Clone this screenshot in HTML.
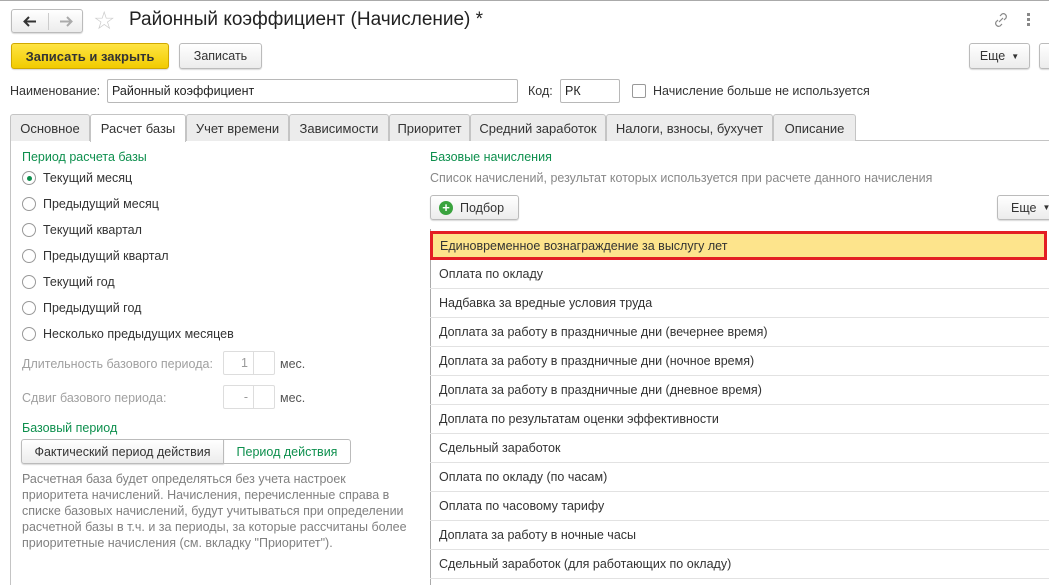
<!DOCTYPE html>
<html><head><meta charset="utf-8"><style>
*{box-sizing:border-box}
body{margin:0;width:1049px;height:585px;overflow:hidden;background:#fff;font-family:"Liberation Sans",Arial,sans-serif;font-size:12.5px;color:#333;position:relative}
.a{position:absolute;white-space:nowrap}
.btn{position:absolute;border:1px solid #bbb;border-radius:3px;background:linear-gradient(#fff,#ececec);box-shadow:0 1px 1px rgba(0,0,0,.15);display:flex;align-items:center;justify-content:center;color:#333}
.inp{position:absolute;border:1px solid #b8b8b8;border-radius:2px;background:#fff;padding-left:4px;display:flex;align-items:center;color:#222}
.tab{position:absolute;top:114px;height:27px;border:1px solid #c4c4c4;border-bottom:none;background:#ececec;display:flex;align-items:center;justify-content:center;color:#333;border-radius:3px 3px 0 0;font-size:13px}
.green{color:#0d8f4d}
.rad{position:absolute;width:14px;height:14px;border:1px solid #999;border-radius:50%;background:#fff}
.row{position:absolute;left:430px;width:620px;height:29px;border-bottom:1px solid #e2e2e2;padding-left:9px;display:flex;align-items:center;color:#333}
.gray{color:#a0a0a0}
</style></head><body>
<div class="a" style="left:0;top:0;width:1049px;height:1px;background:#aaa"></div>
<div class="btn" style="left:11px;top:9px;width:72px;height:24px;justify-content:flex-start">
<svg style="position:absolute;left:11px;top:6px" width="14" height="11" viewBox="0 0 14 11"><path d="M13 5.5H3M6 1L1.5 5.5 6 10" fill="none" stroke="#333" stroke-width="2"/></svg>
<div style="position:absolute;left:36px;top:3px;width:1px;height:17px;background:#ccc"></div>
<svg style="position:absolute;left:47px;top:6px" width="14" height="11" viewBox="0 0 14 11"><path d="M1 5.5H11M8 1l4.5 4.5L8 10" fill="none" stroke="#aaa" stroke-width="2"/></svg></div>
<span class="a" style="left:93px;top:6px;font-size:25px;color:#ccc">☆</span>
<div class="a" style="left:129px;top:9px;font-size:19px;color:#222">Районный коэффициент (Начисление) *</div>
<svg class="a" style="left:992px;top:11px" width="18" height="18" viewBox="0 0 18 18"><path d="M7 11l4-4M8 5l2-2a3 3 0 014 4l-2 2M10 13l-2 2a3 3 0 01-4-4l2-2" fill="none" stroke="#888" stroke-width="1.2"/></svg>
<div class="a" style="left:1027px;top:13px;width:3px;height:3px;background:#888;box-shadow:0 5px #888,0 10px #888"></div>
<div class="btn" style="left:11px;top:43px;width:158px;height:26px;background:linear-gradient(#ffe443,#f1cb00);border-color:#d0a800;font-weight:bold;color:#333;font-size:13px">Записать и закрыть</div>
<div class="btn" style="left:179px;top:43px;width:83px;height:26px">Записать</div>
<div class="btn" style="left:969px;top:43px;width:61px;height:26px">Еще <span style="font-size:8px;margin-left:6px">▼</span></div>
<div class="btn" style="left:1039px;top:43px;width:20px;height:26px"></div>
<div class="a" style="left:10px;top:84px">Наименование:</div>
<div class="inp" style="left:107px;top:79px;width:411px;height:24px">Районный коэффициент</div>
<div class="a" style="left:528px;top:84px">Код:</div>
<div class="inp" style="left:560px;top:79px;width:60px;height:24px">РК</div>
<div class="a" style="left:632px;top:84px;width:14px;height:14px;border:1px solid #999;border-radius:2px"></div>
<div class="a" style="left:653px;top:84px">Начисление больше не используется</div>
<div class="a" style="left:10px;top:140px;width:1039px;height:1px;background:#c4c4c4"></div>
<div class="a" style="left:10px;top:140px;width:1px;height:445px;background:#c4c4c4"></div>
<div class="tab" style="left:10px;width:80px">Основное</div>
<div class="tab" style="left:90px;width:96px;background:#fff;height:28px">Расчет базы</div>
<div class="tab" style="left:186px;width:103px">Учет времени</div>
<div class="tab" style="left:289px;width:100px">Зависимости</div>
<div class="tab" style="left:389px;width:81px">Приоритет</div>
<div class="tab" style="left:470px;width:136px">Средний заработок</div>
<div class="tab" style="left:606px;width:167px">Налоги, взносы, бухучет</div>
<div class="tab" style="left:773px;width:83px">Описание</div>
<div class="a green" style="left:22px;top:150px">Период расчета базы</div>
<div class="rad" style="left:22px;top:171px"><div style="position:absolute;left:4px;top:4px;width:5px;height:5px;border-radius:50%;background:#0d8f4d"></div></div>
<div class="a" style="left:43px;top:171px">Текущий месяц</div>
<div class="rad" style="left:22px;top:197px"></div><div class="a" style="left:43px;top:197px">Предыдущий месяц</div>
<div class="rad" style="left:22px;top:223px"></div><div class="a" style="left:43px;top:223px">Текущий квартал</div>
<div class="rad" style="left:22px;top:249px"></div><div class="a" style="left:43px;top:249px">Предыдущий квартал</div>
<div class="rad" style="left:22px;top:275px"></div><div class="a" style="left:43px;top:275px">Текущий год</div>
<div class="rad" style="left:22px;top:301px"></div><div class="a" style="left:43px;top:301px">Предыдущий год</div>
<div class="rad" style="left:22px;top:327px"></div><div class="a" style="left:43px;top:327px">Несколько предыдущих месяцев</div>
<div class="a gray" style="left:22px;top:357px">Длительность базового периода:</div>
<div class="inp" style="left:223px;top:351px;width:52px;height:24px;border-color:#ddd;justify-content:flex-end;padding-right:26px;color:#999">1</div>
<div class="a" style="left:253px;top:352px;width:1px;height:22px;background:#ddd"></div>
<div class="a" style="left:280px;top:357px;color:#555">мес.</div>
<div class="a gray" style="left:22px;top:391px">Сдвиг базового периода:</div>
<div class="inp" style="left:223px;top:385px;width:52px;height:24px;border-color:#ddd;justify-content:flex-end;padding-right:26px;color:#999">-</div>
<div class="a" style="left:253px;top:386px;width:1px;height:22px;background:#ddd"></div>
<div class="a" style="left:280px;top:391px;color:#555">мес.</div>
<div class="a green" style="left:22px;top:421px">Базовый период</div>
<div class="btn" style="left:21px;top:439px;width:203px;height:25px;border-radius:3px 0 0 3px">Фактический период действия</div>
<div class="a green" style="left:223px;top:439px;width:128px;height:25px;border:1px solid #bbb;border-radius:0 3px 3px 0;display:flex;align-items:center;justify-content:center">Период действия</div>
<div class="a" style="left:22px;top:471px;white-space:normal;width:390px;line-height:16px;color:#808080">Расчетная база будет определяться без учета настроек приоритета начислений. Начисления, перечисленные справа в списке базовых начислений, будут учитываться при определении расчетной базы в т.ч. и за периоды, за которые рассчитаны более приоритетные начисления (см. вкладку "Приоритет").</div>
<div class="a green" style="left:430px;top:150px">Базовые начисления</div>
<div class="a" style="left:430px;top:171px;color:#888">Список начислений, результат которых используется при расчете данного начисления</div>
<div class="btn" style="left:430px;top:195px;width:89px;height:25px;justify-content:flex-start;padding-left:8px"><span style="display:inline-block;width:14px;height:14px;border-radius:50%;background:#3aa33e;color:#fff;font-weight:bold;font-size:13px;line-height:14px;text-align:center;margin-right:7px">+</span>Подбор</div>
<div class="btn" style="left:997px;top:195px;width:70px;height:25px;justify-content:flex-start;padding-left:13px">Еще <span style="font-size:8px;margin-left:6px">▼</span></div>
<div class="a" style="left:430px;top:229px;width:1px;height:356px;background:#aaa"></div>
<div class="row" style="top:231px;background:#fde48c;border:3px solid #e31e24;height:29px;padding-left:7px;left:430px;width:617px">Единовременное вознаграждение за выслугу лет</div>
<div class="row" style="top:260px">Оплата по окладу</div>
<div class="row" style="top:289px">Надбавка за вредные условия труда</div>
<div class="row" style="top:318px">Доплата за работу в праздничные дни (вечернее время)</div>
<div class="row" style="top:347px">Доплата за работу в праздничные дни (ночное время)</div>
<div class="row" style="top:376px">Доплата за работу в праздничные дни (дневное время)</div>
<div class="row" style="top:405px">Доплата по результатам оценки эффективности</div>
<div class="row" style="top:434px">Сдельный заработок</div>
<div class="row" style="top:463px">Оплата по окладу (по часам)</div>
<div class="row" style="top:492px">Оплата по часовому тарифу</div>
<div class="row" style="top:521px">Доплата за работу в ночные часы</div>
<div class="row" style="top:550px">Сдельный заработок (для работающих по окладу)</div>
</body></html>
